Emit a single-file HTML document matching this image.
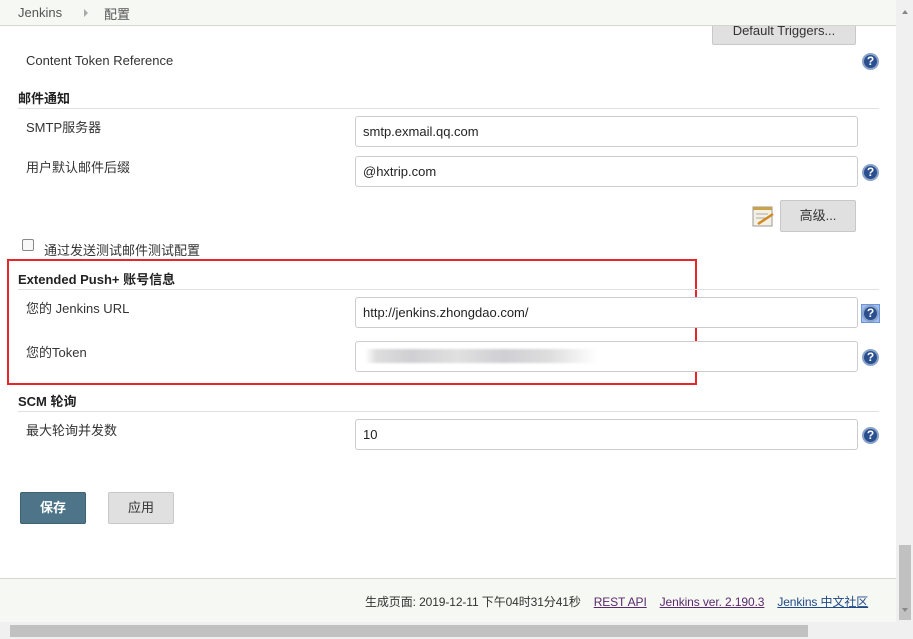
<!DOCTYPE html>
<html><head><meta charset="utf-8"><style>
*{box-sizing:border-box;margin:0;padding:0}
body{width:913px;height:639px;overflow:hidden;position:relative;background:#fff;font-family:"Liberation Sans","Noto Sans CJK SC",sans-serif;font-size:13px;color:#333}
.a{position:absolute}
.hdr{left:0;top:0;width:896px;height:26px;background:#f6f8f3;border-bottom:1px solid #d3d7cf;z-index:2}
.lbl{font-size:13px;color:#333}
.sec{font-weight:bold;font-size:13px;color:#222}
.line{height:1px;background:#e0e0e0}
.inp{border:1px solid #ccc;border-radius:3px;height:31px;padding:7px 7px;font-size:13px;color:#222;background:#fff}
.btn{background:#e0e0e0;border:1px solid #c8c8c8;border-radius:2px;text-align:center;font-size:13px;color:#333}
.q{width:17px;height:17px;border-radius:50%;background:#2a4f8f;border:2px solid #8aa3c9;color:#fff;font-weight:bold;font-size:12px;line-height:13px;text-align:center}
a{text-decoration:underline}
</style></head><body>
<div class="a hdr"></div>
<div class="a lbl" style="left:18px;top:5px;color:#555;z-index:3">Jenkins</div>
<div class="a" style="left:84px;top:9px;width:0;height:0;border-left:4px solid #aaa;border-top:4px solid transparent;border-bottom:4px solid transparent;z-index:3"></div>
<div class="a lbl" style="left:104px;top:4px;color:#555;z-index:3">配置</div>

<div class="a btn" style="left:712px;top:14px;width:144px;height:31px;line-height:30px;padding-top:1px">Default Triggers...</div>
<div class="a lbl" style="left:26px;top:53px">Content Token Reference</div>
<div class="a q" style="left:862px;top:53px">?</div>

<div class="a sec" style="left:18px;top:88px">邮件通知</div>
<div class="a line" style="left:18px;top:108px;width:861px"></div>
<div class="a lbl" style="left:26px;top:117px">SMTP服务器</div>
<div class="a inp" style="left:355px;top:116px;width:503px">smtp.exmail.qq.com</div>
<div class="a lbl" style="left:26px;top:157px">用户默认邮件后缀</div>
<div class="a inp" style="left:355px;top:156px;width:503px">@hxtrip.com</div>
<div class="a q" style="left:862px;top:164px">?</div>
<svg class="a" style="left:751px;top:205px" width="24" height="24"><rect x="2" y="2" width="19" height="19" fill="#f4f1e4" stroke="#999"/><rect x="2" y="2" width="19" height="3" fill="#c9a24a"/><line x1="5" y1="9" x2="17" y2="9" stroke="#aaa"/><line x1="5" y1="13" x2="15" y2="13" stroke="#aaa"/><line x1="7" y1="19" x2="22" y2="9" stroke="#d08a20" stroke-width="2.5"/></svg>
<div class="a btn" style="left:780px;top:200px;width:76px;height:32px;line-height:30px">高级...</div>

<div class="a" style="left:22px;top:239px;width:12px;height:12px;border:1px solid #888;border-radius:2px;background:#f8f8f8"></div>
<div class="a lbl" style="left:44px;top:240px">通过发送测试邮件测试配置</div>

<div class="a" style="left:7px;top:259px;width:690px;height:126px;border:2px solid #e8262a"></div>
<div class="a sec" style="left:18px;top:269px">Extended Push+ 账号信息</div>
<div class="a line" style="left:18px;top:289px;width:861px"></div>
<div class="a lbl" style="left:26px;top:298px">您的 Jenkins URL</div>
<div class="a inp" style="left:355px;top:297px;width:503px">http://jenkins.zhongdao.com/</div>
<div class="a" style="left:861px;top:304px;width:19px;height:19px;background:#9fbdf0;border:1px solid #6d94d8"></div>
<div class="a q" style="left:862px;top:305px">?</div>
<div class="a lbl" style="left:26px;top:342px">您的Token</div>
<div class="a inp" style="left:355px;top:341px;width:503px"></div>
<div class="a" style="left:365px;top:349px;width:232px;height:14px;background:linear-gradient(90deg,#fff,#ddd 5%,#d0d0d4 20%,#e0e0e0 40%,#cfcfd4 60%,#dedede 80%,#fff);filter:blur(1px)"></div>
<div class="a q" style="left:862px;top:349px">?</div>

<div class="a sec" style="left:18px;top:391px">SCM 轮询</div>
<div class="a line" style="left:18px;top:411px;width:861px"></div>
<div class="a lbl" style="left:26px;top:420px">最大轮询并发数</div>
<div class="a inp" style="left:355px;top:419px;width:503px">10</div>
<div class="a q" style="left:862px;top:427px">?</div>

<div class="a" style="left:20px;top:492px;width:66px;height:32px;background:#4d7489;border:1px solid #3e6174;border-radius:2px;color:#fff;font-weight:bold;text-align:center;line-height:30px">保存</div>
<div class="a btn" style="left:108px;top:492px;width:66px;height:32px;line-height:30px">应用</div>

<div class="a" style="left:0;top:578px;width:896px;height:44px;background:#f6f8f3;border-top:1px solid #d3d7cf"></div>
<div class="a" style="left:365px;top:593px;font-size:12px;color:#333;white-space:nowrap;letter-spacing:-0.1px">生成页面: 2019-12-11 下午04时31分41秒&nbsp;&nbsp;&nbsp;&nbsp;<a style="color:#5b2a6e">REST API</a>&nbsp;&nbsp;&nbsp;&nbsp;<a style="color:#5b2a6e">Jenkins ver. 2.190.3</a>&nbsp;&nbsp;&nbsp;&nbsp;<a style="color:#204a87">Jenkins 中文社区</a></div>

<div class="a" style="left:896px;top:0;width:17px;height:639px;background:#f0f0f0"></div>
<div class="a" style="left:899px;top:545px;width:12px;height:75px;background:#c1c1c1"></div>
<div class="a" style="left:0;top:622px;width:896px;height:17px;background:#f0f0f0"></div>
<div class="a" style="left:10px;top:625px;width:798px;height:12px;background:#c1c1c1"></div>
<div class="a" style="left:902px;top:10px;width:0;height:0;border-bottom:4px solid #888;border-left:3px solid transparent;border-right:3px solid transparent"></div>
<div class="a" style="left:902px;top:608px;width:0;height:0;border-top:4px solid #888;border-left:3px solid transparent;border-right:3px solid transparent"></div>
</body></html>
